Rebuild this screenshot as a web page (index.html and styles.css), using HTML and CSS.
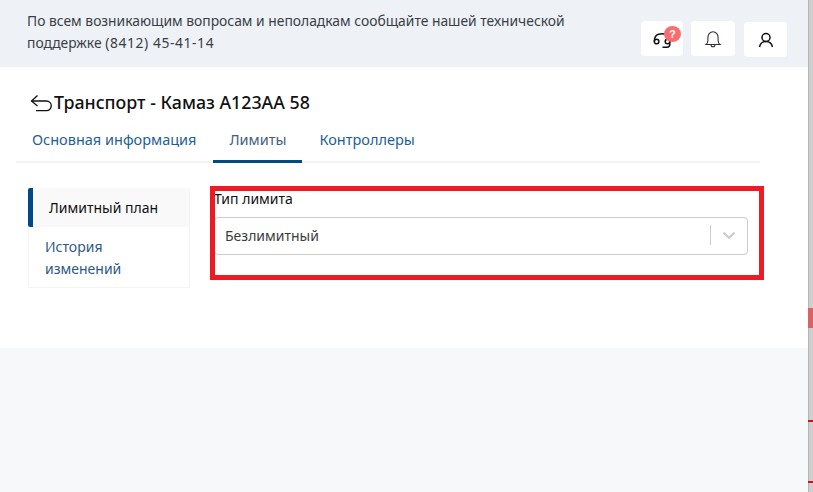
FILE: index.html
```html
<!DOCTYPE html>
<html lang="ru">
<head>
<meta charset="utf-8">
<title>Транспорт</title>
<link rel="stylesheet" href="styles.css">
</head>
<body>
<div class="page">
  <div class="app">
    <header class="topbar">
      <p class="notice">По всем возникающим вопросам и неполадкам сообщайте нашей технической<br>поддержке <span class="phone">(8412) 45-41-14</span></p>
      <div class="actions">
        <button class="icon-btn support">
          <svg width="20" height="20" viewBox="0 0 20 20" fill="none" stroke="#111" stroke-width="1.5"><path d="M2.300 12.500C2.300 8.500 3.500 6 6.500 5.200C9 4.500 12 4.500 14 6"/><circle cx="4.600" cy="12.500" r="2.300"/><circle cx="15.500" cy="12.500" r="2.300"/><path d="M17.800 12.500v3c0 1.700-1.300 2.700-3 2.700h-4.300"/></svg>
          <span class="badge">?</span>
        </button>
        <button class="icon-btn bell">
          <svg width="18" height="20" viewBox="0 0 18 20" fill="none" stroke="#333" stroke-width="1.1"><path d="M2 15.500c1.300-1 1.900-2.200 1.900-4V8.500a5.100 5.800 0 0 1 10.200 0v3c0 1.800.6 3 1.900 4z"/><path d="M7 15.500a2 2.300 0 0 0 4 0"/></svg>
        </button>
        <button class="icon-btn user">
          <svg width="18" height="18" viewBox="0 0 18 18" fill="none" stroke="#111" stroke-width="1.500"><circle cx="9" cy="6.500" r="4"/><path d="M2.500 16c.6-3 3-5.500 6.500-5.500s5.900 2.500 6.500 5.500"/></svg>
        </button>
      </div>
    </header>
    <main class="content">
      <div class="title-row">
        <svg class="back" width="24" height="20" viewBox="0 0 24 20" fill="none" stroke="#111" stroke-width="1.300"><path d="M7.500 2.500 1.500 8 7.500 13"/><path d="M1.500 8H16.500a4.800 4.800 0 0 1 0 9.600H6"/></svg>
        <h1 class="title">Транспорт - Камаз А123АА 58</h1>
      </div>
      <nav class="tabs">
        <a class="tab">Основная информация</a>
        <a class="tab active">Лимиты</a>
        <a class="tab">Контроллеры</a>
      </nav>
      <section class="body">
        <aside class="side">
          <div class="side-item current">Лимитный план</div>
          <div class="side-item">История изменений</div>
        </aside>
        <div class="field">
          <label class="field-label">Тип лимита</label>
          <div class="select">
            <span class="select-value">Безлимитный</span>
            <span class="select-sep"></span>
            <svg class="chevron" width="14" height="9" viewBox="0 0 14 9" fill="none" stroke="#ccc" stroke-width="2.200"><path d="M1.500 1.500 7 6.800l5.500-5.300"/></svg>
          </div>
          <div class="mark"></div>
        </div>
      </section>
    </main>
    <div class="rest"></div>
  </div>
  <div class="scrollstrip">
    <i class="tick pink"></i>
    <i class="tick red one"></i>
    <i class="tick red two"></i>
  </div>
</div>
</body>
</html>
```
FILE: styles.css
```css
* { box-sizing: border-box; }
html, body { margin: 0; height: 100%; overflow: hidden; }
body { font-family: "Noto Sans", "DejaVu Sans", sans-serif; background: #fff; }
.page { display: flex; height: 492px; }
.app { width: 808px; display: flex; flex-direction: column; }
.topbar { height: 67px; background: #eef1f6; display: flex; justify-content: space-between; padding: 10px 21px 0 27px; }
.notice { margin: 0; font-size: 13.850px; line-height: 22px; color: #3a3f47; white-space: nowrap; }
.phone { letter-spacing: .6px; }
.actions { display: flex; gap: 8px; padding-top: 11px; align-items: flex-start; }
.icon-btn { position: relative; border: 0; padding: 0; background: #fff; border-radius: 4px; height: 35px; display: flex; align-items: center; justify-content: center; }
.support { width: 42px; }
.bell { width: 44px; }
.user { width: 43px; margin: 1px 0 0 1px; }
.badge { position: absolute; top: 5px; left: 23px; width: 17px; height: 16px; border-radius: 50%; background: #f96d6f; color: #fff; font-size: 10.500px; font-weight: 700; line-height: 16px; text-align: center; }
.content { height: 281px; background: #fff; padding: 21px 48px 0 16px; display: flex; flex-direction: column; }
.title-row { display: flex; align-items: center; padding-left: 14px; height: 28px; }
.back { flex: none; margin-top: 2px; }
.title { margin: 0; font-size: 17.800px; font-weight: 500; color: #111; line-height: 28px; }
.tabs { display: flex; margin-top: 8px; height: 39px; border-bottom: 2px solid #f3f3f3; padding-left: 16px; gap: 33px; }
.tab { font-size: 14.500px; line-height: 24px; padding-top: 3px; color: #1d5f96; height: 39px; position: relative; }
.tab.active { color: #44627d; }
.tab.active::after { content: ""; position: absolute; left: -16px; right: -16px; bottom: 0; height: 3px; background: #004a87; }
.body { display: flex; margin-top: 25px; padding-left: 12px; }
.side { width: 162px; flex: none; border: 1px solid #f4f4f4; height: 100px; }
.side-item { font-size: 14px; line-height: 22px; padding: 9px 40px 8px 16px; color: #2f5a85; }
.side-item.current { background: #f9f9f9; color: #111; height: 39px; padding: 9px 0 8px 16px; border-left: 5px solid #004a87; border-radius: 2px 0 0 2px; margin: -1px 0 0 -1px; white-space: nowrap; }
.field { position: relative; width: 534px; margin-left: 24px; }
.field-label { display: block; font-size: 14px; line-height: 20px; color: #111; margin-top: 1px; }
.select { display: flex; align-items: center; height: 38px; margin-top: 8px; border: 1px solid #ccc; border-radius: 4px; padding: 0 0 2px 10px; }
.select-value { flex: 1; font-size: 14px; color: #3d3d3d; }
.select-sep { width: 1px; height: 20px; background: #ccc; }
.chevron { margin: 0 11px 0 11px; }
.mark { position: absolute; left: -4px; top: -2px; width: 554px; height: 94px; border: 5px solid #ed1c24; pointer-events: none; }
.rest { flex: 1; background: #f7f8fa; }
.scrollstrip { position: relative; width: 5px; background: #cfcfcf; border-left: 1px solid #b5b5b5; }
.tick { position: absolute; left: -1px; right: 0; display: block; }
.pink { top: 308px; height: 20px; background: #d96363; }
.red { background: #d0121c; height: 2px; }
.one { top: 420px; }
.two { top: 481px; }
```
